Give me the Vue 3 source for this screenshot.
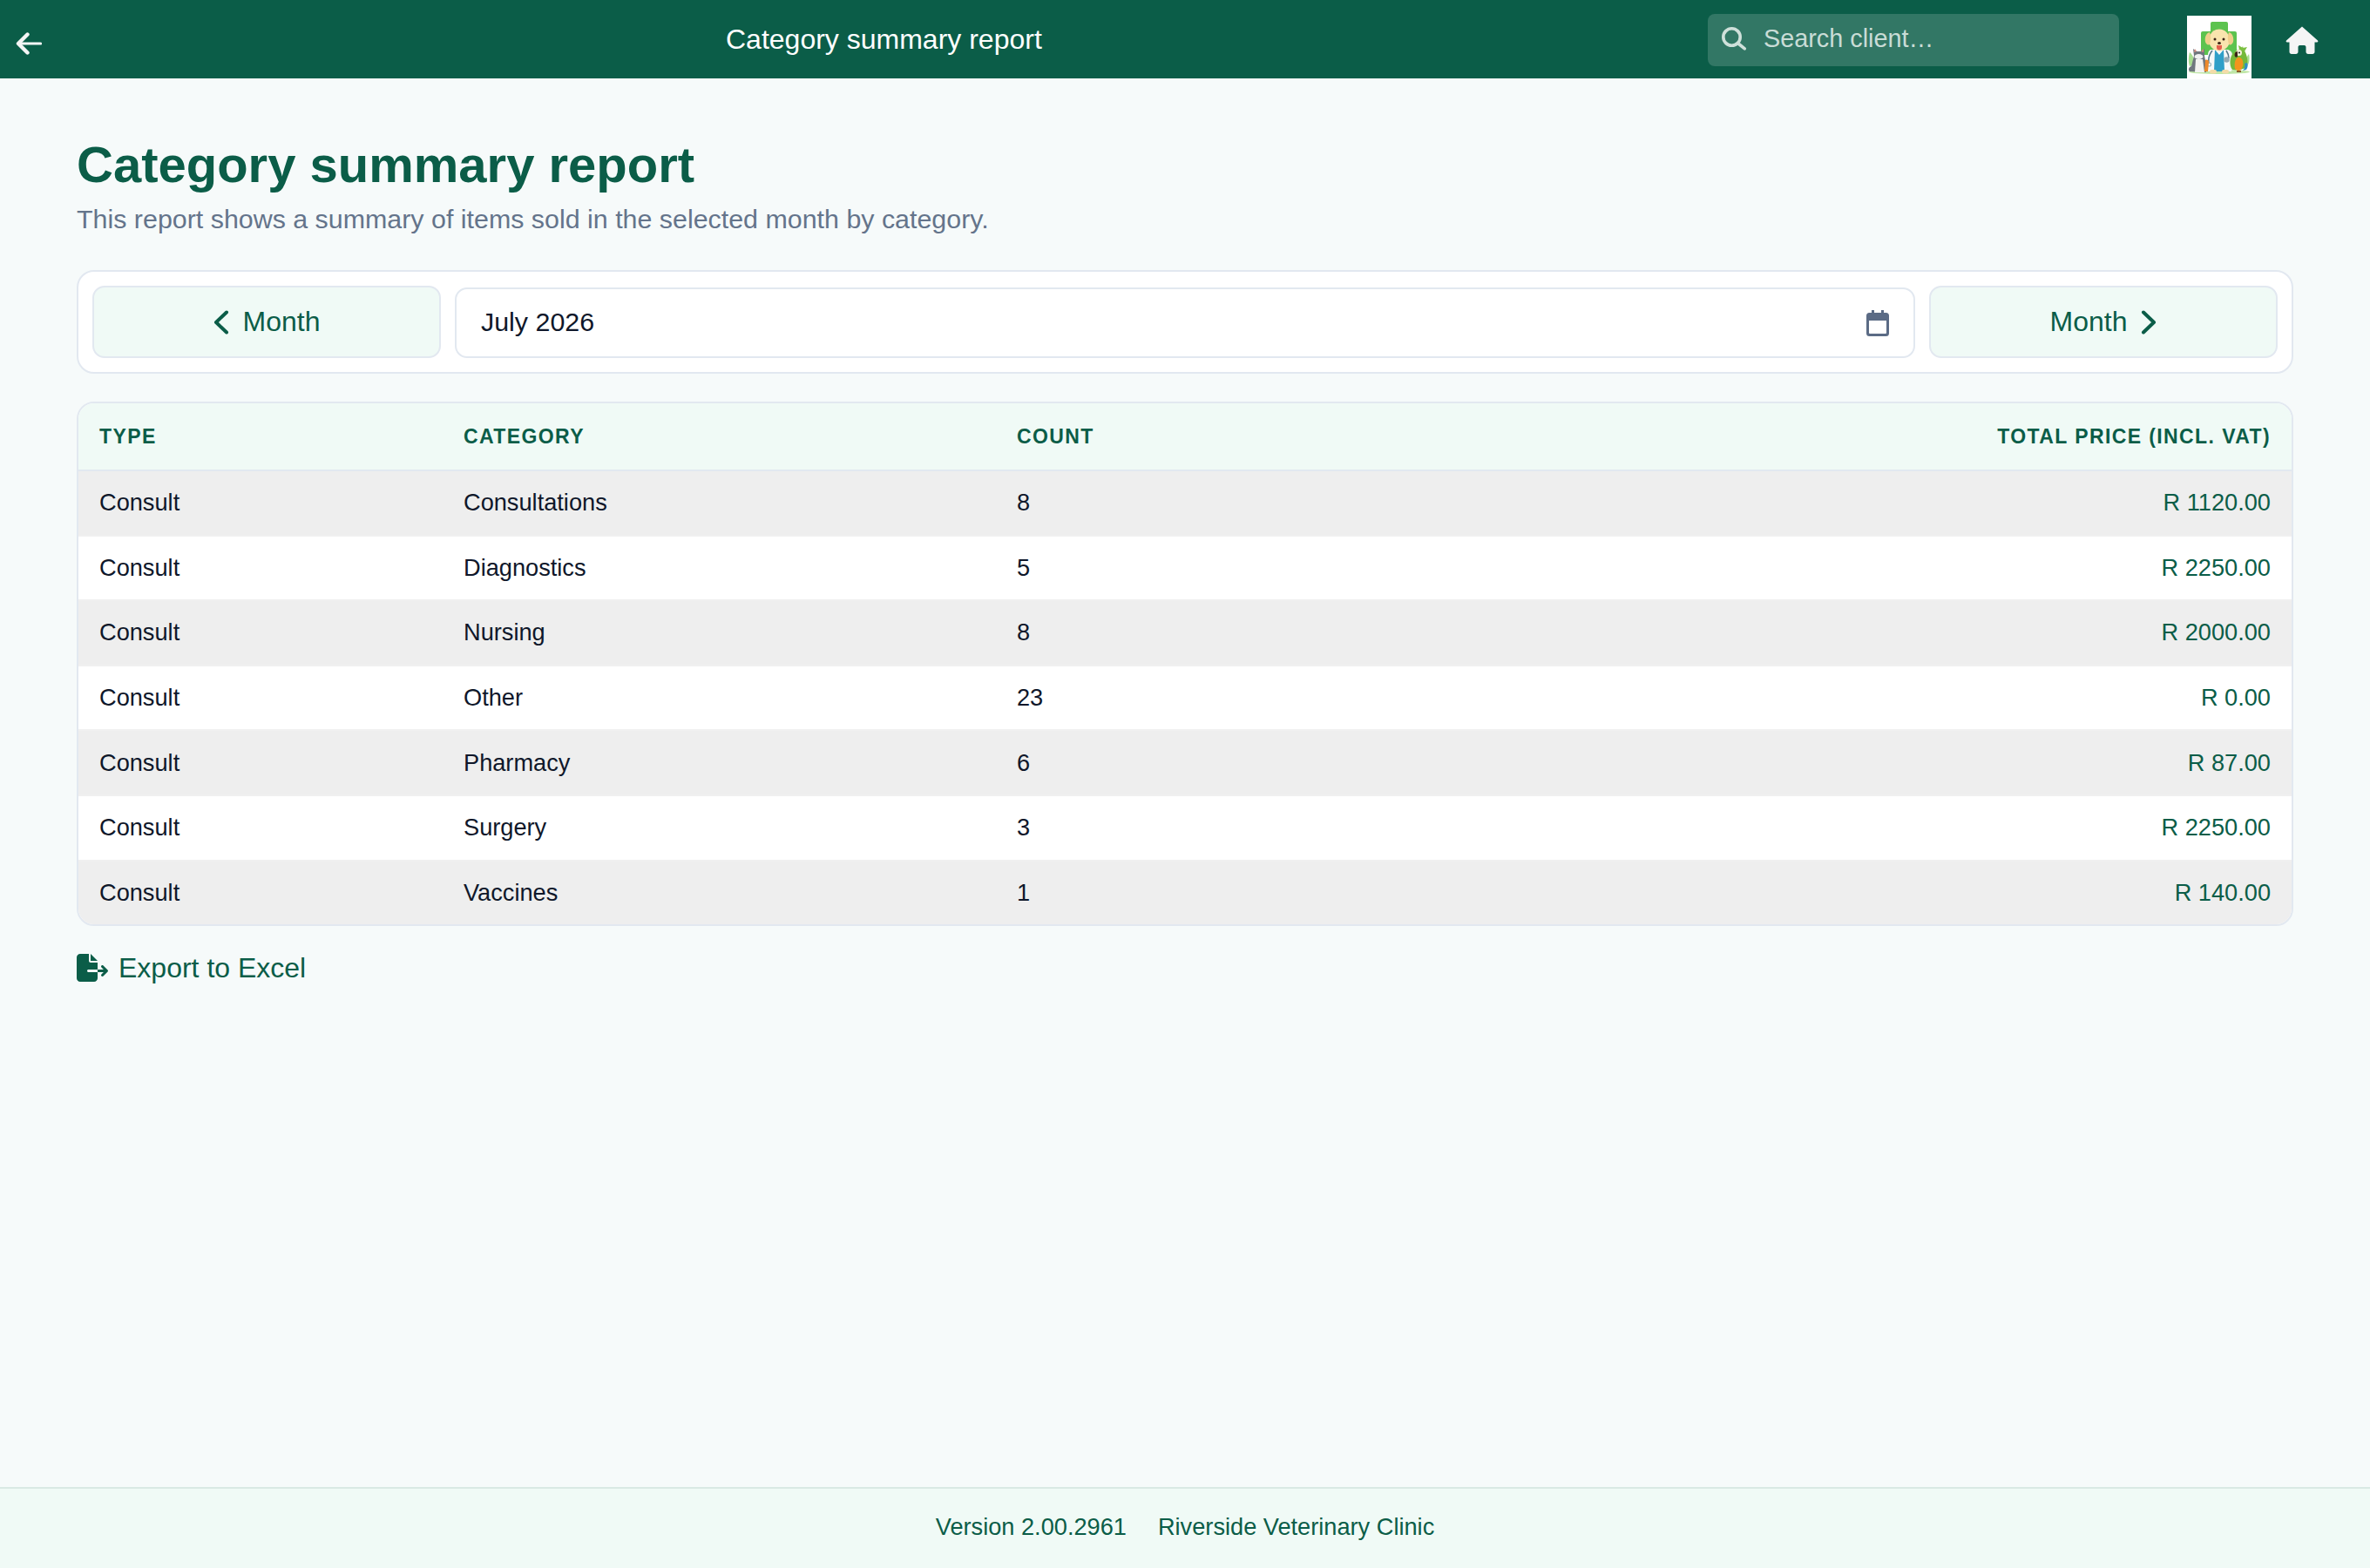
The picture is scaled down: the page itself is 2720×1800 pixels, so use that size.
<template>
  <div class="page">
    <header class="topbar">
      <a class="back" aria-label="Back">
        <svg width="30" height="26" viewBox="0 0 30 26" fill="none" stroke="#f5f5f5" stroke-linecap="round" stroke-linejoin="round">
          <path d="M13.500 2.500 3 13l10.500 10.500" stroke-width="4.400" />
          <path d="M4 13h24.500" stroke-width="3.200" />
        </svg>
      </a>
      <div class="top-title">Category summary report</div>
      <div class="search">
        <svg width="32" height="32" viewBox="0 0 32 32" fill="none" stroke="#cfe0da" stroke-width="3.600" stroke-linecap="round">
          <circle cx="13.500" cy="13.500" r="9.700" />
          <path d="M21 21 28.300 26.800" />
        </svg>
        <span>Search client…</span>
      </div>
      <div class="logo">
        <svg width="74" height="73" viewBox="0 0 74 73">
          <rect width="74" height="73" fill="#fff" />
          <path d="M29 7h16a2 2 0 0 1 2 2v9h8a2 2 0 0 1 2 2v23a2 2 0 0 1-2 2H18a2 2 0 0 1-2-2V20a2 2 0 0 1 2-2h9V9a2 2 0 0 1 2-2z" fill="#5cc34f" />
          <ellipse cx="37" cy="64.500" rx="35" ry="2.500" fill="#bfe6a6" />
          <path d="M3 58c-2-6-1-12 0-16 4 3 6 9 5 15zM69 58c3-4 3-10 2-14-3 3-4 8-3 13z" fill="#a8dd90" />
          <path d="M27 39h20c3 1 5 3 5 6l-1 19H23l1-19c0-3 1-5 3-6z" fill="#f6f8f8" />
          <path d="M32 39l5 6 5-6 1 25H31z" fill="#2f9fc8" />
          <path d="M29 40c-4 5-5 9-4 15M45 40c2 3 3 6 3 9" fill="none" stroke="#55788a" stroke-width="1.600" />
          <circle cx="25.500" cy="56" r="2" fill="none" stroke="#9fb4bd" stroke-width="1.200" />
          <circle cx="45.500" cy="50.500" r="3.200" fill="#93a9b3" />
          <rect x="26" y="62" width="8" height="4.500" rx="2.200" fill="#f3dca8" />
          <rect x="40" y="62" width="8" height="4.500" rx="2.200" fill="#f3dca8" />
          <ellipse cx="37" cy="28" rx="12" ry="12.500" fill="#f9e4ae" />
          <path d="M26 19c-4 1-6 6-5 11 1 3 3 4 5 3 1-4 2-9 0-14zM48 19c4 1 6 6 5 11-1 3-3 4-5 3-1-4-2-9 0-14z" fill="#f0cf8c" />
          <circle cx="32" cy="27" r="1.500" fill="#3a2416" />
          <circle cx="42" cy="27" r="1.500" fill="#3a2416" />
          <ellipse cx="37" cy="31.500" rx="2" ry="1.500" fill="#3a2416" />
          <path d="M34 34h6v2.500a3 3 0 0 1-6 0z" fill="#e4604e" />
          <path d="M3 64c-2-2-1-5 2-6l3-12-1-8 4 3h5l4-3v8l2 11v8z" fill="#6f777e" />
          <path d="M9 38l2 3-3 1zM19 38v4l-3-1z" fill="#d98a80" />
          <ellipse cx="13.500" cy="47" rx="5" ry="3" fill="#f0f1f1" />
          <path d="M10 50h8l2 15h-11z" fill="#f3f3f1" />
          <path d="M21 51c2-1 4 0 4 2l-1 11h-4z" fill="#ee8a2a" />
          <path d="M52 62c-4-5-3-15 1-19 3-4 6-5 9-4l2-4 1 4c4 5 6 15 3 20-3 3-12 4-16 3z" fill="#74b93a" />
          <path d="M60 39l-1-5 5 3 5-1-3 5z" fill="#7cc042" />
          <path d="M55 61c-1-6 0-11 3-13 3-1 5 1 6 4 1 4 0 7-2 10-2 2-5 1-7-1z" fill="#f2941c" />
          <path d="M66 55c1 3 0 6-2 8l4-1c2-3 2-6 1-8z" fill="#2f8fc4" />
          <circle cx="59.500" cy="42.500" r="3.500" fill="#f5f1dc" />
          <circle cx="60" cy="42.500" r="1" fill="#222" />
          <path d="M58 41c-3 0-4 3-3 6 1 1 2 1 3 0z" fill="#3a2416" />
          <rect x="57" y="63" width="5" height="2" fill="#8a5a2a" />
        </svg>
      </div>
      <a class="home" aria-label="Home">
        <svg width="38" height="32" viewBox="0 0 38 32">
          <path d="M19 0.500 37 16.500c.8.800.3 2-.8 2H33.500v11c0 1.400-1 2.500-2.500 2.500h-5c-1.400 0-2.500-1.100-2.500-2.500V24c0-1.100-.9-2-2-2h-5c-1.100 0-2 .9-2 2v5.500c0 1.400-1.100 2.500-2.500 2.500H7c-1.400 0-2.500-1.100-2.500-2.500v-11H1.800c-1.100 0-1.600-1.200-.8-2z" fill="#f5f5f5" />
        </svg>
      </a>
    </header>

    <main class="content">
      <h1>Category summary report</h1>
      <p class="lead">This report shows a summary of items sold in the selected month by category.</p>

      <section class="month-bar">
        <button class="month-btn">
          <svg width="18" height="28" viewBox="0 0 18 28" fill="none" stroke="#0b5d48" stroke-width="4" stroke-linecap="round" stroke-linejoin="round"><path d="M15 2.500 3 14l12 11.500" /></svg>
          Month
        </button>
        <div class="month-input">
          <span>July 2026</span>
          <svg width="26" height="30" viewBox="0 0 26 30">
            <path d="M6 0h3v3h8V0h3v3h2.500A3.500 3.500 0 0 1 26 6.500v20a3.500 3.500 0 0 1-3.500 3.500h-19A3.500 3.500 0 0 1 0 26.500v-20A3.500 3.500 0 0 1 3.500 3H6zM3 12v14a1 1 0 0 0 1 1h18a1 1 0 0 0 1-1V12z" fill="#5b6b85" />
          </svg>
        </div>
        <button class="month-btn">
          Month
          <svg width="18" height="28" viewBox="0 0 18 28" fill="none" stroke="#0b5d48" stroke-width="4" stroke-linecap="round" stroke-linejoin="round"><path d="M3 2.500 15 14 3 25.500" /></svg>
        </button>
      </section>

      <div class="table-wrap">
        <table>
          <colgroup>
            <col class="c-type" />
            <col class="c-cat" />
            <col />
            <col />
          </colgroup>
          <thead>
            <tr>
              <th>TYPE</th>
              <th>CATEGORY</th>
              <th>COUNT</th>
              <th class="right">TOTAL PRICE (INCL. VAT)</th>
            </tr>
          </thead>
          <tbody>
            <tr v-for="row in rows" :key="row.category">
              <td>{{ row.type }}</td>
              <td>{{ row.category }}</td>
              <td>{{ row.count }}</td>
              <td class="right price">{{ row.total }}</td>
            </tr>
          </tbody>
        </table>
      </div>

      <a class="export">
        <svg width="36" height="32" viewBox="0 0 576 512" fill="#0b5d48">
          <path d="M0 64C0 28.700 28.700 0 64 0H224V128c0 17.700 14.300 32 32 32H384V288H216c-13.300 0-24 10.700-24 24s10.700 24 24 24H384V448c0 35.300-28.700 64-64 64H64c-35.300 0-64-28.700-64-64V64zM384 336V288H494.100l-39-39c-9.400-9.400-9.400-24.600 0-33.900s24.600-9.400 33.900 0l80 80c9.400 9.400 9.400 24.600 0 33.900l-80 80c-9.400 9.400-24.600 9.400-33.900 0s-9.400-24.600 0-33.900l39-39H384zm0-208H256V0L384 128z" />
        </svg>
        Export to Excel
      </a>
    </main>

    <footer class="footer">
      <span>Version 2.00.2961</span>
      <span>Riverside Veterinary Clinic</span>
    </footer>
  </div>
</template>

<script setup>
const rows = [
  { type: 'Consult', category: 'Consultations', count: 8, total: 'R 1120.00' },
  { type: 'Consult', category: 'Diagnostics', count: 5, total: 'R 2250.00' },
  { type: 'Consult', category: 'Nursing', count: 8, total: 'R 2000.00' },
  { type: 'Consult', category: 'Other', count: 23, total: 'R 0.00' },
  { type: 'Consult', category: 'Pharmacy', count: 6, total: 'R 87.00' },
  { type: 'Consult', category: 'Surgery', count: 3, total: 'R 2250.00' },
  { type: 'Consult', category: 'Vaccines', count: 1, total: 'R 140.00' },
];
</script>

<style>
html,
body {
  margin: 0;
  background: #f6fafa;
}
</style>

<style scoped>
.page {
  min-height: 1800px;
  display: flex;
  flex-direction: column;
  font-family: 'Liberation Sans', Arial, sans-serif;
  color: #0f172a;
  background: #f6fafa;
}

.topbar {
  height: 90px;
  flex: none;
  display: flex;
  align-items: flex-start;
  background: #0b5d48;
  color: #fff;
}

.back {
  width: 20px;
  margin: 37px 0 0 18px;
  line-height: 0;
}

.top-title {
  margin-left: 795px;
  font-size: 32px;
  line-height: 90px;
}

.search {
  width: 472px;
  height: 60px;
  margin: 16px 78px 0 auto;
  padding: 0 0 3px 14px;
  box-sizing: border-box;
  display: flex;
  align-items: center;
  gap: 18px;
  border-radius: 8px;
  background: rgba(255, 255, 255, 0.16);
  color: #c9dcd6;
  font-size: 28.8px;
}

.logo {
  width: 74px;
  height: 73px;
  margin-top: 18px;
  position: relative;
  line-height: 0;
}

.home {
  margin: 30px 59px 0 39px;
  line-height: 0;
}

.content {
  flex: 1;
  padding: 0 88px;
}

h1 {
  margin: 68px 0 0;
  font-size: 58px;
  line-height: 62px;
  font-weight: 700;
  color: #0b5d48;
}

.lead {
  margin: 11px 0 0;
  font-size: 30.4px;
  line-height: 40px;
  color: #64748b;
}

.month-bar {
  margin-top: 39px;
  height: 119px;
  box-sizing: border-box;
  padding: 16px;
  display: flex;
  align-items: stretch;
  gap: 16px;
  background: #fff;
  border: 2px solid #e2e8f0;
  border-radius: 20px;
}

.month-btn {
  width: 400px;
  flex: none;
  display: flex;
  align-items: center;
  justify-content: center;
  gap: 16px;
  padding: 0;
  font: inherit;
  font-size: 32px;
  color: #0b5d48;
  background: #f0faf6;
  border: 2px solid #e2e8f0;
  border-radius: 14px;
}

.month-input {
  flex: 1;
  margin-top: 2px;
  padding: 0 28px;
  display: flex;
  align-items: center;
  justify-content: space-between;
  font-size: 30.4px;
  border: 2px solid #e2e8f0;
  border-radius: 14px;
}

.month-input span {
  margin-bottom: 2px;
}

.table-wrap {
  margin-top: 32px;
  border: 2px solid #e2e8f0;
  border-radius: 20px;
  overflow: hidden;
  background: #fff;
}

table {
  width: 100%;
  border-collapse: collapse;
  table-layout: fixed;
  font-size: 27.2px;
}

.c-type {
  width: 418px;
}

.c-cat {
  width: 635px;
}

th {
  height: 76px;
  padding: 0 24px;
  text-align: left;
  font-size: 23px;
  font-weight: 700;
  letter-spacing: 1.4px;
  color: #0b5d48;
  background: #f0faf6;
}

td {
  height: 72.6px;
  padding: 0 24px;
  border-top: 2px solid #f0f0f0;
}

tbody tr:first-child td {
  border-top-color: #e2e8f0;
}

tbody tr:nth-child(odd) td {
  background: #eeeeee;
}

.right {
  text-align: right;
}

.price {
  color: #0b5d48;
}

.export {
  margin-top: 29px;
  display: flex;
  align-items: center;
  gap: 12px;
  font-size: 32px;
  line-height: 38px;
  color: #0b5d48;
}

.footer {
  height: 93px;
  flex: none;
  box-sizing: border-box;
  padding-bottom: 3px;
  display: flex;
  align-items: center;
  justify-content: center;
  gap: 36px;
  font-size: 27.2px;
  color: #0b5d48;
  background: #f0faf6;
  border-top: 2px solid #d9e9e4;
}
</style>
